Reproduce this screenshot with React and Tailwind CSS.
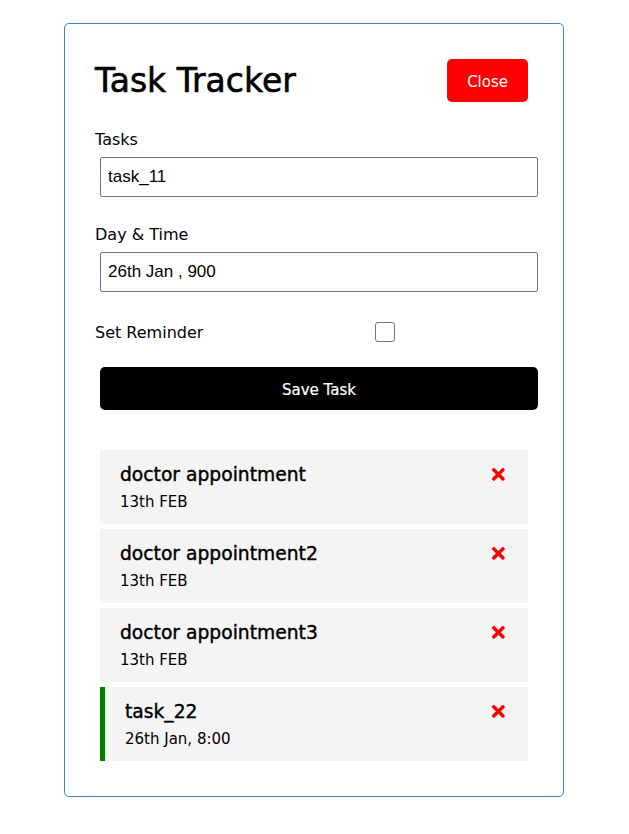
import { FaTimes } from "react-icons/fa";

const tasks = [
  { id: 1, text: "doctor appointment", day: "13th FEB", reminder: false },
  { id: 2, text: "doctor appointment2", day: "13th FEB", reminder: false },
  { id: 3, text: "doctor appointment3", day: "13th FEB", reminder: false },
  { id: 4, text: "task_22", day: "26th Jan, 8:00", reminder: true },
];

export default function App() {
  return (
    <div className="min-h-screen bg-white pt-[23px] text-black font-['DejaVu_Sans',sans-serif]">
      <div className="ml-[64px] w-[500px] min-h-[300px] rounded-[5px] border border-[#4682b4] p-[30px]">
        {/* Header */}
        <header className="mb-5 flex items-center justify-between">
          <h1 className="text-[33px] leading-[48px] font-normal [-webkit-text-stroke:0.6px_black]">Task Tracker</h1>
          <button className="m-[5px] rounded-[5px] bg-[#ff0000] px-5 pt-[12px] pb-[8px] text-[15px] leading-[23px] text-white">
            Close
          </button>
        </header>

        {/* Add form */}
        <form className="mb-10">
          <div className="my-5 flex flex-col">
            <label className="text-base leading-[25px]">Tasks</label>
            <input
              readOnly
              value="task_11"
              className="m-[5px] h-10 w-full shrink-0 rounded-[2px] border border-[#767676] px-[7px] py-[3px] text-[17px] font-['Liberation_Sans',Arial,sans-serif] outline-none"
            />
          </div>
          <div className="my-5 flex flex-col">
            <label className="text-base leading-[25px]">Day &amp; Time</label>
            <input
              readOnly
              value="26th Jan , 900"
              className="m-[5px] h-10 w-full shrink-0 rounded-[2px] border border-[#767676] px-[7px] py-[3px] text-[17px] font-['Liberation_Sans',Arial,sans-serif] outline-none"
            />
          </div>
          <div className="my-5 flex items-center justify-between">
            <label className="flex-1 text-base leading-[25px]">Set Reminder</label>
            <div className="m-[5px] flex h-5 flex-[2] justify-center">
              <div className="h-5 w-5 rounded-[3px] border border-[#767676] bg-white" />
            </div>
          </div>
          <button
            type="button"
            className="m-[5px] block h-[43px] w-full rounded-[5px] bg-black pt-[3px] text-[15px] text-white [-webkit-text-stroke:0.2px_white]"
          >
            Save Task
          </button>
        </form>

        {/* Task list */}
        <div>
          {tasks.map((task) => (
            <div
              key={task.id}
              className={
                task.reminder
                  ? "m-[5px] border-l-[5px] border-[#008000] bg-[#f4f4f4] px-5 py-[10px]"
                  : "m-[5px] bg-[#f4f4f4] px-5 py-[10px]"
              }
            >
              <h3 className="flex items-center justify-between text-[18.72px] leading-[29px] [-webkit-text-stroke:0.4px_black]">
                {task.text}
                <FaTimes className="text-[#ff0000] [-webkit-text-stroke:0]" />
              </h3>
              <p className="pt-[2px] text-[15px] leading-[23px]">{task.day}</p>
            </div>
          ))}
        </div>
      </div>
    </div>
  );
}
